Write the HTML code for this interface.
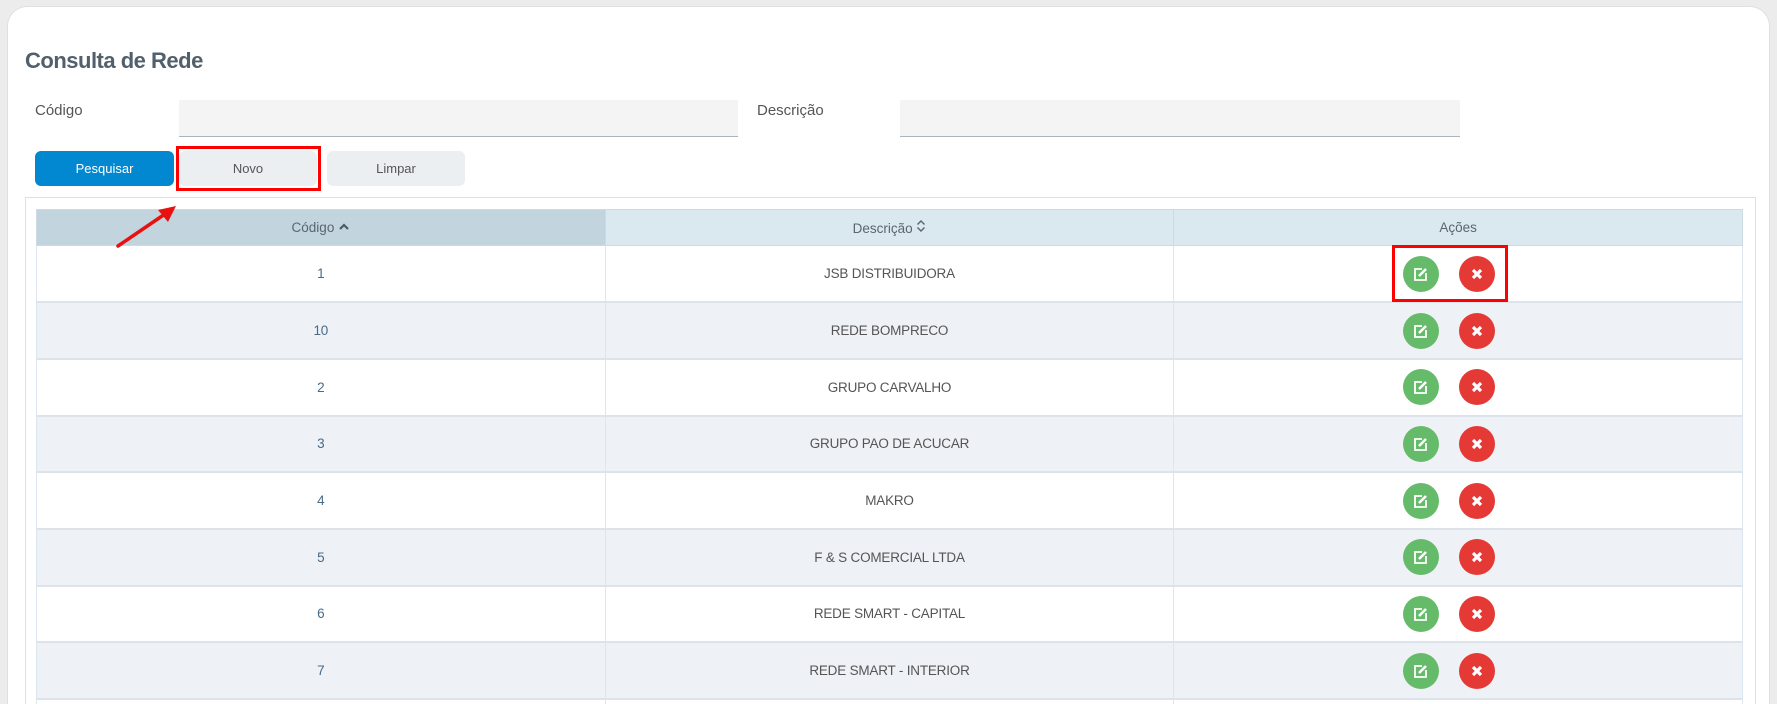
<!DOCTYPE html>
<html><head><meta charset="utf-8"><style>
*{box-sizing:border-box;margin:0;padding:0}
html,body{width:1777px;height:704px;overflow:hidden}
body{background:#ececec;font-family:"Liberation Sans",sans-serif;position:relative;color:#5a6570}
.card{position:absolute;left:7px;top:6px;width:1763px;height:698px;background:#fff;border-radius:20px 20px 0 0;border:1px solid #e0e0e0;border-bottom:none}
.abs{position:absolute}
h1{position:absolute;left:25px;top:48px;font-size:22px;font-weight:bold;color:#51606c;letter-spacing:-0.5px}
.lbl{font-size:15px;color:#555}
.inp{background:#f4f4f4;border-bottom:1px solid #a9b4bd}
.btn{position:absolute;top:151px;height:35px;border-radius:6px;font-size:13px;display:flex;align-items:center;justify-content:center}
.clip{position:absolute;left:0;top:0;width:1777px;height:704px;overflow:hidden}
table{position:absolute;left:36px;top:209px;width:1707px;border-collapse:collapse;font-size:13.5px}
th{height:36px;font-weight:normal;color:#5a6570;background:#dae8f0;border:1px solid #cfdbe3;width:569px}
th.s{background:#c2d5de}
td{height:56.7px;text-align:center;border-left:1px solid #dde6ee;border-right:1px solid #dde6ee;border-bottom:2px solid #dde3ea;color:#555;letter-spacing:-0.2px}
tr:nth-child(odd) td{background:#eef1f6}
td.n{color:#4a6a85}
.c{display:inline-block;width:36px;height:36px;border-radius:50%;vertical-align:middle;position:relative;margin:0 10px}
.g{background:#66bb6a}.r{background:#e53935}
</style></head><body>
<div class="card"></div>
<h1>Consulta de Rede</h1>
<div class="abs lbl" style="left:35px;top:102px">Código</div>
<div class="abs inp" style="left:179px;top:100px;width:559px;height:37px"></div>
<div class="abs lbl" style="left:757px;top:102px">Descrição</div>
<div class="abs inp" style="left:900px;top:100px;width:560px;height:37px"></div>
<div class="btn" style="left:35px;width:139px;background:#0288d1;color:#fff">Pesquisar</div>
<div class="btn" style="left:179px;width:138px;background:#eceff2;color:#555">Novo</div>
<div class="abs" style="left:176px;top:146px;width:145px;height:45px;border:3px solid #f00;"></div>
<div class="btn" style="left:327px;width:138px;background:#eceff2;color:#555">Limpar</div>
<div class="clip">
<div class="abs" style="left:25px;top:197px;width:1731px;height:520px;border:1px solid #dde1e4"></div>
<table>
<tr><th class="s">Código <svg width="12" height="10" viewBox="0 0 12 10"><path d="M2 7 L6 3 L10 7" stroke="#4a5a6a" stroke-width="2.2" fill="none"/></svg></th><th>Descrição <svg width="10" height="14" viewBox="0 0 10 14"><path d="M1.5 5.5 L5 2 L8.5 5.5 M1.5 8.5 L5 12 L8.5 8.5" stroke="#5a6570" stroke-width="1.4" fill="none"/></svg></th><th>Ações</th></tr>
<tr><td class="n">1</td><td>JSB DISTRIBUIDORA</td><td>ACT</td></tr>
<tr><td class="n">10</td><td>REDE BOMPRECO</td><td>ACT</td></tr>
<tr><td class="n">2</td><td>GRUPO CARVALHO</td><td>ACT</td></tr>
<tr><td class="n">3</td><td>GRUPO PAO DE ACUCAR</td><td>ACT</td></tr>
<tr><td class="n">4</td><td>MAKRO</td><td>ACT</td></tr>
<tr><td class="n">5</td><td>F &amp; S COMERCIAL LTDA</td><td>ACT</td></tr>
<tr><td class="n">6</td><td>REDE SMART - CAPITAL</td><td>ACT</td></tr>
<tr><td class="n">7</td><td>REDE SMART - INTERIOR</td><td>ACT</td></tr>
<tr><td class="n"></td><td></td><td></td></tr>
</table>
</div>
<div class="abs" style="left:1392px;top:245px;width:116px;height:57px;border:3px solid #f00"></div>
<svg class="abs" style="left:0;top:0" width="300" height="300"><path d="M118 246 L165 214" stroke="#e81010" stroke-width="3.5" stroke-linecap="round"/><path d="M176 206 L158 210 L168 222 Z" fill="#e81010"/></svg>
<script>
var act='<span class="c g" style="margin-left:-8px"><svg width="36" height="36" viewBox="0 0 36 36"><path d="M19 13 H12 V24 H23 V17" fill="none" stroke="#fff" stroke-width="1.8"/><path d="M16 20 L23 13" stroke="#fff" stroke-width="2.6"/></svg></span><span class="c r"><svg width="36" height="36" viewBox="0 0 36 36"><path d="M14 14 L22 22 M22 14 L14 22" stroke="#fff" stroke-width="3.2"/></svg></span>';
document.querySelectorAll('td').forEach(function(t){if(t.textContent==='ACT')t.innerHTML=act;});
</script>
</body></html>
